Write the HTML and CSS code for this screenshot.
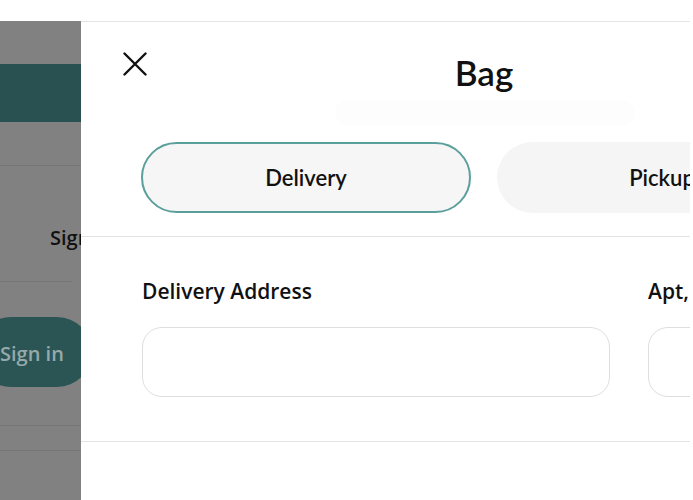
FILE: index.html
```html
<!DOCTYPE html>
<html lang="en">
<head>
<meta charset="utf-8">
<title>Bag</title>
<link rel="stylesheet" href="styles.css">
</head>
<body>
<div class="viewport">
  <div class="topstrip"></div>
  <div class="stage">
    <div class="bgpage">
      <div class="bg-bar"></div>
      <div class="bg-rule r1"></div>
      <div class="bg-link">Sign in</div>
      <div class="bg-rule r2"></div>
      <div class="bg-btn">Sign in</div>
      <div class="bg-rule r3"></div>
      <div class="bg-rule r4"></div>
    </div>
    <aside class="drawer">
      <header class="drawer-head">
        <button class="close" aria-label="Close">
          <svg viewBox="0 0 24 24" width="24" height="24"><path d="M1.5 1.5 L22.5 22.5 M22.5 1.5 L1.5 22.5" stroke="#111" stroke-width="2.4" stroke-linecap="round" fill="none"/></svg>
        </button>
        <h1 class="title">Bag</h1>
        <span></span>
      </header>
      <div class="skeleton"></div>
      <div class="toggle">
        <button class="pill active">Delivery</button>
        <button class="pill">Pickup</button>
      </div>
      <div class="divider d1"></div>
      <div class="form">
        <label class="field">
          <span class="label">Delivery Address</span>
          <span class="input"></span>
        </label>
        <label class="field">
          <span class="label">Apt, Suite, Floor</span>
          <span class="input"></span>
        </label>
      </div>
      <div class="divider d2"></div>
    </aside>
  </div>
</div>
</body>
</html>
```
FILE: styles.css
```css
html, body {
  margin: 0;
  padding: 0;
  background: #ffffff;
  overflow: hidden;
}
body {
  width: 693px;
  height: 500px;
  font-family: "Open Sans", "Noto Sans", sans-serif;
  color: #111;
}
.viewport {
  width: 690px;
  height: 500px;
  overflow: hidden;
  background: #fff;
}
.topstrip {
  height: 21px;
  background: #fff;
}
.stage {
  position: relative;
  height: 479px;
  overflow: hidden;
  background: #818181;
}
.bgpage {
  width: 100%;
}
.bg-bar {
  margin-top: 43px;
  height: 58px;
  background: #2a5151;
}
.bg-rule {
  height: 1px;
  background: #767676;
}
.r1 { margin-top: 43px; }
.r2 { margin-top: 29px; width: 72px; }
.r3 { margin-top: 38px; }
.r4 { margin-top: 24px; }
.bg-link {
  margin-top: 58px;
  padding-left: 50px;
  font-size: 20px;
  font-weight: 600;
  line-height: 28px;
  color: #111;
}
.bg-btn {
  margin-top: 35px;
  margin-left: -24px;
  width: 116px;
  height: 70px;
  border-radius: 35px;
  background: #2b5555;
  color: #97a9a9;
  font-size: 20px;
  font-weight: 600;
  display: flex;
  align-items: center;
  padding-left: 24px;
  padding-top: 2px;
  box-sizing: border-box;
}
.drawer {
  position: absolute;
  left: 81px;
  top: 0;
  bottom: 0;
  width: 806px;
  background: #fff;
  border-top: 1px solid #e4e4e4;
}
.drawer-head {
  display: grid;
  grid-template-columns: 1fr auto 1fr;
  align-items: start;
  padding: 30px 42px 0;
}
.close {
  width: 24px;
  height: 24px;
  padding: 0;
  margin: 0;
  border: 0;
  background: none;
  justify-self: start;
}
.close svg { display: block; }
.title {
  margin: 0;
  font-family: "Lato", "Open Sans", sans-serif;
  font-size: 35px;
  font-weight: 600;
  line-height: 40px;
  color: #111;
}
.skeleton {
  margin: 8px auto 0;
  width: 300px;
  height: 25px;
  border-radius: 13px;
  background: #fdfdfd;
  position: relative;
  left: 1px;
}
.toggle {
  display: grid;
  grid-template-columns: 330px 330px;
  gap: 26px;
  padding: 0 60px;
  margin-top: 17px;
}
.pill {
  height: 71px;
  border-radius: 36px;
  border: 0;
  background: #f5f5f5;
  font-family: "Lato", "Open Sans", sans-serif;
  font-size: 22px;
  font-weight: 600;
  color: #111;
  box-sizing: border-box;
  padding: 0;
}
.pill.active {
  background: #f6f6f6;
  border: 2.5px solid #5b9f9c;
}
.divider {
  height: 1px;
  background: #e3e3e3;
}
.d1 { margin-top: 23px; }
.d2 { margin-top: 44px; }
.form {
  display: grid;
  grid-template-columns: 468px 300px;
  gap: 38px;
  padding: 40px 0 0 61px;
}
.field {
  display: flex;
  flex-direction: column;
  gap: 22px;
}
.label {
  font-size: 21px;
  font-weight: 600;
  line-height: 28px;
  white-space: nowrap;
  color: #111;
}
.input {
  display: block;
  height: 70px;
  border: 1px solid #dedede;
  border-radius: 20px;
  box-sizing: border-box;
  background: #fff;
}
```
